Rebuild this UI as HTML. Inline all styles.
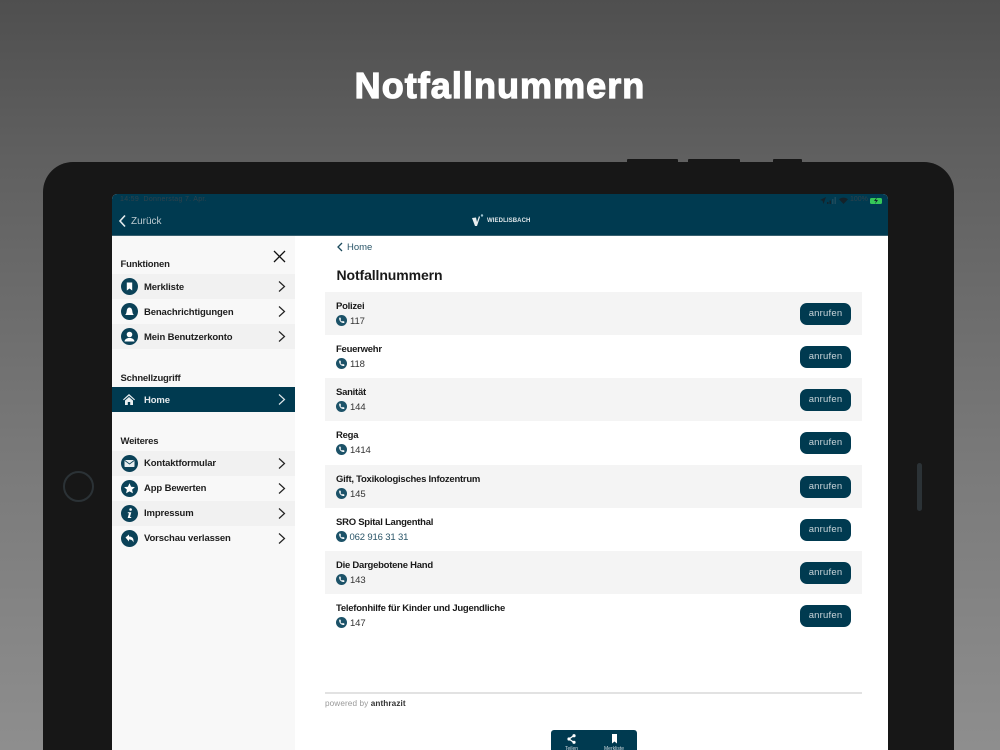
<!DOCTYPE html>
<html lang="de"><head><meta charset="utf-8"><title>Notfallnummern</title>
<style>
html,body{margin:0;padding:0;width:1000px;height:750px;overflow:hidden}
body{position:relative;background:linear-gradient(180deg,#4f4f4f 0,#5f5f5f 150px,#7b7b7b 480px,#8e8e8e 750px);font-family:"Liberation Sans",sans-serif;color:#1a1a1a}
div,span,svg{position:absolute;white-space:nowrap}
.h{left:0;top:64px;width:1000px;text-align:center;color:#fff;font-weight:700;font-size:36px;line-height:44px;letter-spacing:1.05px;-webkit-text-stroke:1.2px #fff}
.tablet{left:43px;top:162px;width:911px;height:620px;background:#171717;border-radius:30px}
.btnb{top:159px;height:4px;background:#171717;border-radius:1px 1px 0 0}
.screen{left:112px;top:194px;width:776px;height:556px;background:#fff;border-radius:5px 5px 0 0;overflow:hidden}
.top{left:0;top:0;width:776px;height:42px;background:#003a50;border-bottom:1px solid #38606f;box-sizing:border-box}
.side{left:0;top:42px;width:183px;height:514px;background:#f8f8f8}
.sh{left:8.500px;font-size:9.500px;font-weight:700;line-height:14px;color:#222;letter-spacing:-.2px}
.sr{left:0;width:183px;height:25px}
.sr.a{background:#f1f1f1}
.sr.home{background:#003a50;height:25px}
.sr b{position:absolute;left:32px;top:.5px;line-height:25px;font-size:9.500px;color:#1d1d1d;letter-spacing:-.13px}
.ic{left:9px;top:4px;width:17px;height:17px;border-radius:50%;background:#0b4258}
.ic svg{left:0;top:0;width:17px;height:17px}
.cv{left:166px;top:7px;width:8px;height:11px}
.row{left:213px;width:537px;height:43px}
.row.a{background:#f4f4f4}
.row b{position:absolute;left:11px;top:8px;font-size:9.500px;line-height:13px;color:#1a1a1a;letter-spacing:-.25px}
.ph{left:11px;top:22.500px;width:11px;height:11px}
.num{position:absolute;left:25px;top:22.500px;font-size:9.500px;line-height:13px;color:#333;letter-spacing:-.1px}
.call{left:475px;top:10.500px;width:51px;height:22px;border-radius:7px;background:#003a50;color:#c9d5da;font-size:9.500px;line-height:21.500px;text-align:center;letter-spacing:.2px}
</style></head><body>
<div class="h">Notfallnummern</div>
<div class="btnb" style="left:627px;width:51px"></div>
<div class="btnb" style="left:688px;width:52px"></div>
<div class="btnb" style="left:773px;width:29px"></div>
<div class="tablet"></div>
<div style="left:63px;top:471px;width:27px;height:27px;border:2px solid #2b3236;border-radius:50%"></div>
<div style="left:917px;top:463px;width:5px;height:48px;background:#2b3236;border-radius:3px"></div>

<div class="screen">
 <div class="top">
  <span style="left:8px;top:0;font-size:7px;line-height:12px;color:#2e424c;letter-spacing:.3px">14:59&nbsp;&nbsp;Donnerstag 7. Apr.</span>
  <svg style="left:6px;top:20px;width:9px;height:14px" viewBox="0 0 9 14"><path d="M7 1.500 2 7l5 5.500" fill="none" stroke="#e4ebee" stroke-width="1.600"/></svg>
  <span style="left:19px;top:20.500px;font-size:10px;line-height:14px;color:#bccbd1">Zurück</span>
  <svg style="left:360px;top:20px;width:12px;height:13px" viewBox="0 0 12 13"><path d="M0 4 4 3.500 5 8 7 2 8 3 5 12H3z" fill="#e8eef0"/><circle cx="10" cy="1.500" r="1.200" fill="#9fc3d0"/></svg>
  <span style="left:375px;top:22px;font-size:6px;line-height:10px;font-weight:700;color:#dfe7ea;letter-spacing:.1px">WIEDLISBACH</span>
  <svg style="left:708px;top:3px;width:6px;height:7px" viewBox="0 0 6 7"><path d="M6 0 0 3l2.500.8L3.500 7z" fill="#14222a"/></svg>
  <svg style="left:715px;top:3px;width:9px;height:7px" viewBox="0 0 9 7"><path d="M0 5h1.500v2H0zM2.500 3.500H4V7H2.500z" fill="#14222a"/><path d="M5 2h1.500v5H5zM7.500 0H9v7H7.500z" fill="#1c4a5c"/></svg>
  <svg style="left:727px;top:3px;width:9px;height:7px" viewBox="0 0 9 7"><path d="M0 2.300C2.500 0 6.500 0 9 2.300L4.500 7z" fill="#14222a"/></svg>
  <span style="left:738px;top:0;font-size:7px;line-height:12px;color:#2e424c">100%</span>
  <div style="left:758px;top:3.500px;width:12px;height:6px;background:#35c759;border-radius:1.500px"></div>
  <svg style="left:761px;top:3px;width:6px;height:7px" viewBox="0 0 6 7"><path d="M4 0 1 4h2L2 7l3-4H3z" fill="#10242d"/></svg>
 </div>

 <div class="side">
  <svg style="left:161px;top:14px;width:13px;height:13px" viewBox="0 0 13 13"><path d="M1 1l11 11M12 1 1 12" stroke="#111" stroke-width="1.300" fill="none"/></svg>
  <div class="sh" style="top:21.500px">Funktionen</div>

  <div class="sr a" style="top:38px"><div class="ic"><svg viewBox="0 0 17 17"><path d="M5.800 4.500h5.400v8l-2.700-2-2.700 2z" fill="#fff"/></svg></div><b>Merkliste</b>
   <svg class="cv" viewBox="0 0 8 11"><path d="M1 .5 6.500 5.500 1 10.500" fill="none" stroke="#222" stroke-width="1.200"/></svg></div>
  <div class="sr" style="top:63px"><div class="ic"><svg viewBox="0 0 17 17"><path d="M4 12c1.500-1 1.500-3 1.800-4.500C6.100 5.500 7.200 4.500 8.500 4.500s2.400 1 2.700 3C11.500 9 11.500 11 13 12z" fill="#fff"/></svg></div><b>Benachrichtigungen</b>
   <svg class="cv" viewBox="0 0 8 11"><path d="M1 .5 6.500 5.500 1 10.500" fill="none" stroke="#222" stroke-width="1.200"/></svg></div>
  <div class="sr a" style="top:88px"><div class="ic"><svg viewBox="0 0 17 17"><circle cx="8.500" cy="6.500" r="2.800" fill="#fff"/><path d="M3.500 13.500c.3-2.500 2.500-3 3.500-3.500h3c1 .5 3.200 1 3.500 3.500z" fill="#fff"/></svg></div><b>Mein Benutzerkonto</b>
   <svg class="cv" viewBox="0 0 8 11"><path d="M1 .5 6.500 5.500 1 10.500" fill="none" stroke="#222" stroke-width="1.200"/></svg></div>

  <div class="sh" style="top:135.500px">Schnellzugriff</div>
  <div class="sr home" style="top:151px"><svg style="left:11px;top:7px;width:12px;height:11px" viewBox="0 0 12 11"><path d="M6 0 0 5.500l.8.800L6 1.800l5.200 4.500.8-.8zM2 6.500 6 3l4 3.500V11H7.200V8H4.800v3H2z" fill="#e8eef0"/></svg><b style="color:#e3e9ec">Home</b>
   <svg class="cv" viewBox="0 0 8 11"><path d="M1 .5 6.500 5.500 1 10.500" fill="none" stroke="#dfe6e9" stroke-width="1.200"/></svg></div>

  <div class="sh" style="top:198.500px">Weiteres</div>
  <div class="sr a" style="top:214.500px"><div class="ic"><svg viewBox="0 0 17 17"><rect x="3.500" y="5" width="10" height="7" rx=".8" fill="#e8eef0"/><path d="M3.800 5.500 8.500 9l4.700-3.500" fill="none" stroke="#0b4258" stroke-width=".8"/></svg></div><b>Kontaktformular</b>
   <svg class="cv" viewBox="0 0 8 11"><path d="M1 .5 6.500 5.500 1 10.500" fill="none" stroke="#222" stroke-width="1.200"/></svg></div>
  <div class="sr" style="top:239.500px"><div class="ic"><svg viewBox="0 0 17 17"><path d="m8.500 3.200 1.600 3.500 3.800.4-2.800 2.500.8 3.700-3.400-1.900-3.400 1.900.8-3.700L3.100 7.100l3.800-.4z" fill="#fff"/></svg></div><b>App Bewerten</b>
   <svg class="cv" viewBox="0 0 8 11"><path d="M1 .5 6.500 5.500 1 10.500" fill="none" stroke="#222" stroke-width="1.200"/></svg></div>
  <div class="sr a" style="top:264.500px"><div class="ic"><svg viewBox="0 0 17 17"><circle cx="9.600" cy="4.500" r="1.300" fill="#fff"/><path d="M6.800 7.200h3.500L9 12h1.200v1H6.700L8 8.200H6.800z" fill="#fff"/></svg></div><b>Impressum</b>
   <svg class="cv" viewBox="0 0 8 11"><path d="M1 .5 6.500 5.500 1 10.500" fill="none" stroke="#222" stroke-width="1.200"/></svg></div>
  <div class="sr" style="top:289.500px"><div class="ic"><svg viewBox="0 0 17 17"><path d="M4.500 7.500 8 4.500v2c3 0 5 1.500 4.500 6-.7-2-2-3-4.500-3v2z" fill="#fff"/></svg></div><b>Vorschau verlassen</b>
   <svg class="cv" viewBox="0 0 8 11"><path d="M1 .5 6.500 5.500 1 10.500" fill="none" stroke="#222" stroke-width="1.200"/></svg></div>
 </div>

 <svg style="left:225px;top:48px;width:6px;height:10px" viewBox="0 0 6 10"><path d="M5 1 1 5l4 4" fill="none" stroke="#1c4a5c" stroke-width="1.300"/></svg>
 <span style="left:235px;top:46.500px;font-size:9.500px;line-height:14px;color:#2a5568">Home</span>
 <span style="left:224.500px;top:71.500px;font-size:14px;line-height:18px;font-weight:700;color:#1a1a1a;letter-spacing:-.1px">Notfallnummern</span>

 <div class="row a" style="top:98px"><b>Polizei</b><svg class="ph" viewBox="0 0 11 11"><circle cx="5.500" cy="5.500" r="5.500" fill="#1c5268"/><path d="M3 2.800 4.300 2.500l.8 1.700-.7.700c.3.800.9 1.400 1.700 1.700l.7-.7 1.700.8-.3 1.300c-3 .3-5.300-2-5-5.200z" fill="#fff"/></svg><span class="num">117</span><div class="call">anrufen</div></div>
 <div class="row" style="top:141px"><b>Feuerwehr</b><svg class="ph" viewBox="0 0 11 11"><circle cx="5.500" cy="5.500" r="5.500" fill="#1c5268"/><path d="M3 2.800 4.300 2.500l.8 1.700-.7.700c.3.800.9 1.400 1.700 1.700l.7-.7 1.700.8-.3 1.300c-3 .3-5.300-2-5-5.200z" fill="#fff"/></svg><span class="num">118</span><div class="call">anrufen</div></div>
 <div class="row a" style="top:184px"><b>Sanität</b><svg class="ph" viewBox="0 0 11 11"><circle cx="5.500" cy="5.500" r="5.500" fill="#1c5268"/><path d="M3 2.800 4.300 2.500l.8 1.700-.7.700c.3.800.9 1.400 1.700 1.700l.7-.7 1.700.8-.3 1.300c-3 .3-5.300-2-5-5.200z" fill="#fff"/></svg><span class="num">144</span><div class="call">anrufen</div></div>
 <div class="row" style="top:227px"><b>Rega</b><svg class="ph" viewBox="0 0 11 11"><circle cx="5.500" cy="5.500" r="5.500" fill="#1c5268"/><path d="M3 2.800 4.300 2.500l.8 1.700-.7.700c.3.800.9 1.400 1.700 1.700l.7-.7 1.700.8-.3 1.300c-3 .3-5.300-2-5-5.200z" fill="#fff"/></svg><span class="num">1414</span><div class="call">anrufen</div></div>
 <div class="row a" style="top:271px"><b>Gift, Toxikologisches Infozentrum</b><svg class="ph" viewBox="0 0 11 11"><circle cx="5.500" cy="5.500" r="5.500" fill="#1c5268"/><path d="M3 2.800 4.300 2.500l.8 1.700-.7.700c.3.800.9 1.400 1.700 1.700l.7-.7 1.700.8-.3 1.300c-3 .3-5.300-2-5-5.200z" fill="#fff"/></svg><span class="num">145</span><div class="call">anrufen</div></div>
 <div class="row" style="top:314px"><b>SRO Spital Langenthal</b><svg class="ph" viewBox="0 0 11 11"><circle cx="5.500" cy="5.500" r="5.500" fill="#1c5268"/><path d="M3 2.800 4.300 2.500l.8 1.700-.7.700c.3.800.9 1.400 1.700 1.700l.7-.7 1.700.8-.3 1.300c-3 .3-5.300-2-5-5.200z" fill="#fff"/></svg><span class="num" style="color:#2a5568;left:24.500px;letter-spacing:-.15px">062 916 31 31</span><div class="call">anrufen</div></div>
 <div class="row a" style="top:357px"><b>Die Dargebotene Hand</b><svg class="ph" viewBox="0 0 11 11"><circle cx="5.500" cy="5.500" r="5.500" fill="#1c5268"/><path d="M3 2.800 4.300 2.500l.8 1.700-.7.700c.3.800.9 1.400 1.700 1.700l.7-.7 1.700.8-.3 1.300c-3 .3-5.300-2-5-5.200z" fill="#fff"/></svg><span class="num">143</span><div class="call">anrufen</div></div>
 <div class="row" style="top:400px"><b>Telefonhilfe für Kinder und Jugendliche</b><svg class="ph" viewBox="0 0 11 11"><circle cx="5.500" cy="5.500" r="5.500" fill="#1c5268"/><path d="M3 2.800 4.300 2.500l.8 1.700-.7.700c.3.800.9 1.400 1.700 1.700l.7-.7 1.700.8-.3 1.300c-3 .3-5.300-2-5-5.200z" fill="#fff"/></svg><span class="num">147</span><div class="call">anrufen</div></div>

 <div style="left:213px;top:498px;width:537px;height:2px;background:#e2e2e2"></div>
 <span style="left:213px;top:504px;font-size:8.200px;line-height:12px;color:#999;letter-spacing:.1px">powered by <b style="color:#333">anthrazit</b></span>

 <div style="left:439px;top:536px;width:86px;height:24px;background:#003a50;border-radius:3px 3px 0 0"></div>
 <svg style="left:455px;top:540px;width:9px;height:10px" viewBox="0 0 9 10"><path d="M7 1.500 2 5l5 3.500" fill="none" stroke="#fff" stroke-width="1.300"/><circle cx="7" cy="1.700" r="1.600" fill="#fff"/><circle cx="2" cy="5" r="1.600" fill="#fff"/><circle cx="7" cy="8.300" r="1.600" fill="#fff"/></svg>
 <svg style="left:499px;top:540px;width:7px;height:10px" viewBox="0 0 7 10"><path d="M1 0h5v9.500l-2.500-2-2.500 2z" fill="#fff"/></svg>
 <span style="left:453px;top:552px;font-size:5px;line-height:7px;color:#cfdade">Teilen</span>
 <span style="left:492px;top:552px;font-size:5px;line-height:7px;color:#cfdade">Merkliste</span>
</div>
</body></html>
